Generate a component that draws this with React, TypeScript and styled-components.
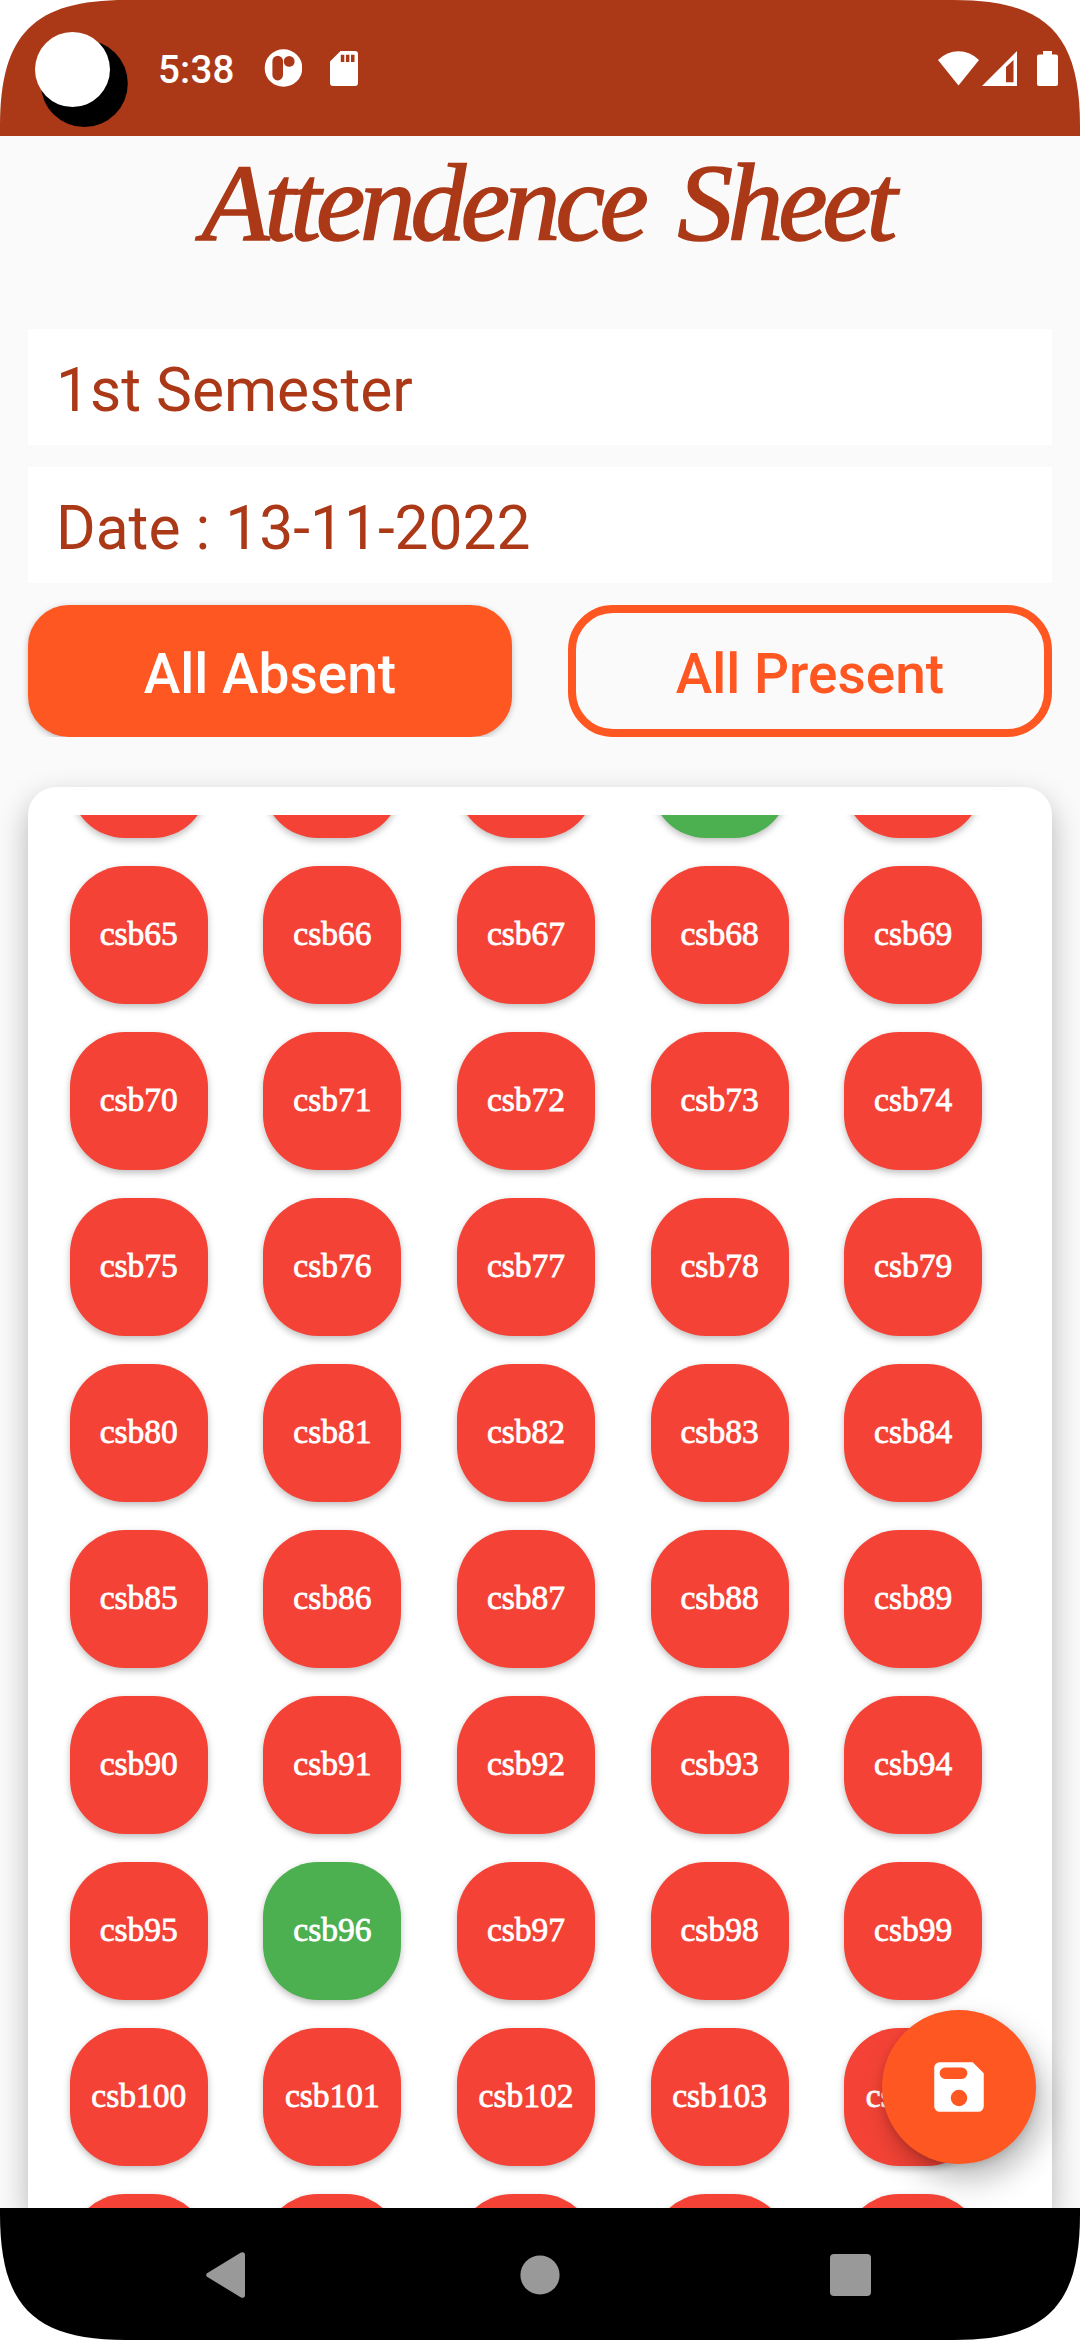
import React from 'react';
import styled, { createGlobalStyle } from 'styled-components';

const rust = '#ab3917';
const orange = '#ff5722';

const GlobalStyle = createGlobalStyle`
  * { box-sizing: border-box; }
  body { margin: 0; background: #fff; font-family: Roboto, "Liberation Sans", sans-serif; }
`;

const Phone = styled.div`
  position: relative;
  display: flex;
  flex-direction: column;
  width: 1080px;
  height: 2340px;
  overflow: hidden;
  background: #fafafa;
  clip-path: path('M0 126C0 34 34 0 126 0H954C1046 0 1080 34 1080 126V2214C1080 2306 1046 2340 954 2340H126C34 2340 0 2306 0 2214Z');
`;

const StatusBar = styled.header`
  flex: none;
  display: flex;
  align-items: center;
  height: 136px;
  padding: 0 22px 0 35px;
  background: ${rust};
`;

const Camera = styled.svg`
  flex: none;
  width: 93px;
  height: 136px;
`;

const Clock = styled.time`
  margin-left: 30px;
  padding-top: 3px;
  width: 105px;
  color: #fff;
  font-size: 38.5px;
  font-weight: 500;
  line-height: 46px;
  letter-spacing: 0.2px;
`;

const StatusIcons = styled.div`
  display: flex;
  align-items: center;
  margin-left: auto;
`;

const Glyph = styled.svg<{ $w: number; $h: number; $gap?: number }>`
  display: block;
  flex: none;
  width: ${p => p.$w}px;
  height: ${p => p.$h}px;
  margin-left: ${p => p.$gap ?? 0}px;
`;

const Content = styled.main`
  flex: 1;
  min-height: 0;
  display: flex;
  flex-direction: column;
  padding: 0 28px;
  overflow: hidden;
`;

const Title = styled.h1`
  margin: 0;
  padding: 7px 0 0 14px;
  height: 193px;
  color: ${rust};
  font-family: "Liberation Serif", serif;
  font-style: italic;
  font-weight: 400;
  font-size: 111px;
  line-height: 120px;
  letter-spacing: -5.1px;
  word-spacing: 11px;
  text-align: center;
  white-space: nowrap;
  -webkit-text-stroke: 1.6px ${rust};
`;

const Field = styled.div`
  flex: none;
  height: 116px;
  margin-bottom: 22px;
  padding: 0 28px;
  background: #fff;
  color: ${rust};
  font-size: 60.5px;
  line-height: 124px;
`;

const Actions = styled.div`
  flex: none;
  display: flex;
  gap: 56px;
  height: 132px;
  clip-path: inset(-10px -10px 0 -10px);
`;

const ActionButton = styled.button<{ $filled?: boolean }>`
  flex: 1;
  padding: 6px 0 0;
  border: 8px solid ${orange};
  border-radius: ${p => (p.$filled ? 41 : 45)}px;
  background: ${p => (p.$filled ? orange : 'transparent')};
  color: ${p => (p.$filled ? '#fff' : orange)};
  box-shadow: ${p => (p.$filled ? '0 2px 6px rgba(0, 0, 0, 0.25)' : 'none')};
  font-family: inherit;
  font-size: 55px;
  font-weight: 500;
  line-height: 64px;
`;

const Card = styled.section`
  flex: 1;
  min-height: 0;
  margin-top: 50px;
  padding: 28px 14px 0;
  border-radius: 28px 28px 0 0;
  background: #fff;
  box-shadow: 0 12px 30px rgba(0, 0, 0, 0.28);
`;

const ScrollArea = styled.div`
  height: 100%;
  overflow: hidden;
`;

const Grid = styled.div`
  display: grid;
  grid-template-columns: repeat(5, 193.6px);
  grid-auto-rows: 138px;
  row-gap: 28px;
  margin-top: -115px;
  justify-items: center;
`;

const Student = styled.button<{ $present: boolean }>`
  width: 138px;
  height: 138px;
  padding: 0 0 2px;
  border: 0;
  border-radius: 55px;
  background: ${p => (p.$present ? '#4caf50' : '#f44336')};
  box-shadow: 0 3px 7px rgba(0, 0, 0, 0.26);
  color: #fff;
  font-family: "Liberation Serif", serif;
  font-size: 33.5px;
  line-height: 40px;
  -webkit-text-stroke: 0.8px #fff;
`;

const SaveButton = styled.button`
  position: absolute;
  right: 44px;
  bottom: 176px;
  display: grid;
  place-items: center;
  width: 154px;
  height: 154px;
  padding: 0;
  border: 0;
  border-radius: 50%;
  background: ${orange};
  box-shadow: 8px 16px 30px rgba(0, 0, 0, 0.26), 0 3px 8px rgba(0, 0, 0, 0.14);
`;

const NavBar = styled.nav`
  flex: none;
  display: flex;
  align-items: center;
  justify-content: space-between;
  height: 132px;
  padding: 1px 209px 0 206px;
  background: #000;
`;

const present = new Set([63, 96]);
const students = Array.from({ length: 50 }, (_, i) => 60 + i);

const inView = (n: number) => n >= 65 && n < 105;

export default function App() {
  return (
    <>
      <GlobalStyle />
      <Phone>
        <StatusBar>
          <Camera viewBox="35 0 93 136">
            <circle cx="84.3" cy="83.5" r="43.5" fill="#000" />
            <circle cx="72.5" cy="69.5" r="37.5" fill="#fff" />
          </Camera>
          <Clock>5:38</Clock>
          <Glyph $w={38} $h={38} viewBox="0 0 38 38" $gap={1}>
            <circle cx="19.5" cy="19" r="18.8" fill="#fff" />
            <rect x="8.4" y="6.8" width="10.6" height="24.6" rx="5.3" fill={rust} />
            <circle cx="25.2" cy="12.4" r="5.4" fill={rust} />
          </Glyph>
          <Glyph $w={28} $h={35} viewBox="0 0 28 35" $gap={28}>
            <path
              fill="#fff"
              fillRule="evenodd"
              d="M10.5 0H25a3 3 0 0 1 3 3v29a3 3 0 0 1-3 3H3a3 3 0 0 1-3-3V10.500zM10.800 3.700V11h3.500V3.700zM15.900 3.700V11h3.500V3.700zM21 3.700V11h3.500V3.700z"
            />
          </Glyph>
          <StatusIcons>
            <Glyph $w={41} $h={35} viewBox="0 0 41 35">
              <path fill="#fff" d="M0 9Q9 .3 20.500 .3T41 9L20.500 34.500z" />
            </Glyph>
            <Glyph $w={35} $h={35} viewBox="0 0 35 35" $gap={3}>
              <path fill="#fff" fillRule="evenodd" d="M35 0V35H0zM31.500 9L24 16V31.300H31.500z" />
            </Glyph>
            <Glyph $w={21} $h={35} viewBox="0 0 21 35" $gap={20}>
              <path fill="#fff" d="M6 0h9v3.500h4a2 2 0 0 1 2 2V33a2 2 0 0 1-2 2H2a2 2 0 0 1-2-2V5.500a2 2 0 0 1 2-2h4z" />
            </Glyph>
          </StatusIcons>
        </StatusBar>

        <Content>
          <Title>Attendence Sheet</Title>
          <Field>1st Semester</Field>
          <Field>Date : 13-11-2022</Field>
          <Actions>
            <ActionButton $filled>All Absent</ActionButton>
            <ActionButton>All Present</ActionButton>
          </Actions>
          <Card>
            <ScrollArea>
              <Grid>
                {students.map(n => (
                  <Student key={n} $present={present.has(n)}>
                    {inView(n) ? `csb${n}` : null}
                  </Student>
                ))}
              </Grid>
            </ScrollArea>
          </Card>
        </Content>

        <SaveButton aria-label="Save">
          <Glyph $w={66} $h={66} viewBox="0 0 24 24">
            <path
              fill="#fff"
              fillRule="evenodd"
              d="M5 3H17L21 7V19a2 2 0 0 1-2 2H5a2 2 0 0 1-2-2V5a2 2 0 0 1 2-2zM7 4.950a2.050 2.050 0 0 0 0 4.100h6a2.050 2.050 0 0 0 0-4.100zM12 13a3 3 0 1 0 0 6a3 3 0 0 0 0-6z"
            />
          </Glyph>
        </SaveButton>

        <NavBar>
          <Glyph $w={39} $h={46} viewBox="0 0 39 46">
            <path fill="#999" d="M1 21.300L35 .5Q38.800-.8 39 3V43Q38.800 46.800 35 45.500L1 24.700Q-.7 23 1 21.300z" />
          </Glyph>
          <Glyph $w={40} $h={40} viewBox="0 0 40 40" $gap={5}>
            <circle cx="20" cy="20" r="19.600" fill="#999" />
          </Glyph>
          <Glyph $w={41} $h={42} viewBox="0 0 41 42">
            <rect width="41" height="42" rx="4" fill="#999" />
          </Glyph>
        </NavBar>
      </Phone>
    </>
  );
}
